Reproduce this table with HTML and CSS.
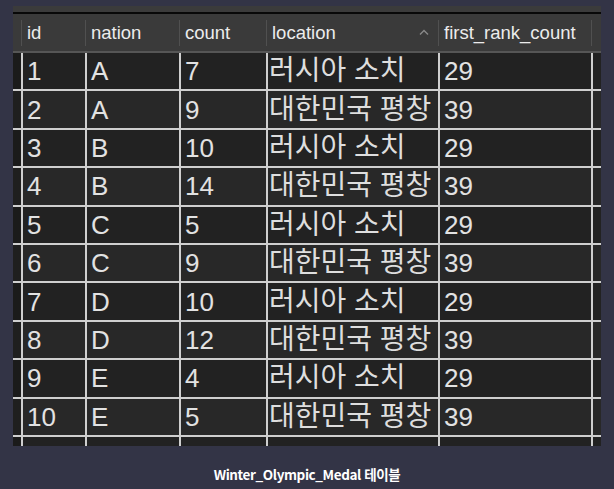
FILE: index.html
```html
<!DOCTYPE html>
<html lang="ko">
<head>
<meta charset="utf-8">
<title>Winter_Olympic_Medal</title>
<link rel="stylesheet" href="styles.css">
</head>
<body>
<main class="page">
  <figure class="shot">
    <div class="topband"></div>
    <table class="grid">
      <colgroup>
        <col class="c-rh"><col class="c-id"><col class="c-nation"><col class="c-count"><col class="c-loc"><col class="c-frc"><col class="c-rest">
      </colgroup>
      <thead>
        <tr>
          <th class="rh"></th>
          <th><div class="hc">id</div></th>
          <th><div class="hc">nation</div></th>
          <th><div class="hc">count</div></th>
          <th><div class="hc hc-sort">location<svg class="caret" width="10" height="6" viewBox="0 0 10 6"><path d="M1 5.5 L5 1.5 L9 5.5" fill="none" stroke="#8a8a8a" stroke-width="1.4"/></svg></div></th>
          <th><div class="hc">first_rank_count</div></th>
          <th><div class="hc hc-end"></div></th>
        </tr>
      </thead>
      <tbody>
        <tr><td class="rh"></td><td>1</td><td>A</td><td>7</td><td class="ko">러시아 소치</td><td>29</td><td class="rest"></td></tr>
        <tr><td class="rh"></td><td>2</td><td>A</td><td>9</td><td class="ko">대한민국 평창</td><td>39</td><td class="rest"></td></tr>
        <tr><td class="rh"></td><td>3</td><td>B</td><td>10</td><td class="ko">러시아 소치</td><td>29</td><td class="rest"></td></tr>
        <tr><td class="rh"></td><td>4</td><td>B</td><td>14</td><td class="ko">대한민국 평창</td><td>39</td><td class="rest"></td></tr>
        <tr><td class="rh"></td><td>5</td><td>C</td><td>5</td><td class="ko">러시아 소치</td><td>29</td><td class="rest"></td></tr>
        <tr><td class="rh"></td><td>6</td><td>C</td><td>9</td><td class="ko">대한민국 평창</td><td>39</td><td class="rest"></td></tr>
        <tr><td class="rh"></td><td>7</td><td>D</td><td>10</td><td class="ko">러시아 소치</td><td>29</td><td class="rest"></td></tr>
        <tr><td class="rh"></td><td>8</td><td>D</td><td>12</td><td class="ko">대한민국 평창</td><td>39</td><td class="rest"></td></tr>
        <tr><td class="rh"></td><td>9</td><td>E</td><td>4</td><td class="ko">러시아 소치</td><td>29</td><td class="rest"></td></tr>
        <tr><td class="rh"></td><td>10</td><td>E</td><td>5</td><td class="ko">대한민국 평창</td><td>39</td><td class="rest"></td></tr>
        <tr class="partial"><td class="rh"></td><td></td><td></td><td></td><td></td><td></td><td class="rest"></td></tr>
      </tbody>
    </table>
  </figure>
  <p class="caption">Winter_Olympic_Medal 테이블</p>
</main>
</body>
</html>
```
FILE: styles.css
```css
html, body {
  margin: 0;
  padding: 0;
  background: #333446;
}

.page {
  width: 614px;
  height: 489px;
  padding-top: 6px;
  box-sizing: border-box;
  display: flex;
  flex-direction: column;
}

.shot {
  margin: 0 0 0 13px;
  width: 588px;
  background: #232323;
}

.topband {
  height: 6px;
  background: #3b3b3b;
  border-bottom: 2px solid #080808;
}

.grid {
  table-layout: fixed;
  border-collapse: separate;
  border-spacing: 0;
  width: 588px;
  font-family: "Liberation Sans", "Noto Sans CJK KR", Arial, sans-serif;
  color: #e2e2e2;
}

.c-rh { width: 8px; }
.c-id { width: 64px; }
.c-nation { width: 94px; }
.c-count { width: 87px; }
.c-loc { width: 172px; }
.c-frc { width: 153px; }
.c-rest { width: 10px; }

thead th {
  background: #3a3a3a;
  height: 37px;
  padding: 0;
  border-bottom: 2px solid #565656;
  font-weight: normal;
  text-align: left;
  font-size: 18.5px;
  vertical-align: middle;
  color: #ececec;
}

.hc {
  height: 26px;
  line-height: 26px;
  border-left: 1.5px solid #505050;
  padding-left: 5px;
  white-space: nowrap;
  overflow: hidden;
  box-sizing: border-box;
}

.hc-sort {
  display: flex;
  align-items: center;
  justify-content: space-between;
  padding-right: 9px;
}

.caret {
  margin-top: -2px;
}

tbody td {
  height: 36.4px;
  padding: 0 0 0 4px;
  border-left: 2px solid #cfcfcf;
  border-bottom: 2px solid #cfcfcf;
  font-size: 26px;
  line-height: 30px;
  white-space: nowrap;
  overflow: hidden;
  background: #222222;
  box-sizing: content-box;
}

tbody td.ko {
  font-size: 28px;
  padding-left: 1px;
  color: #dedede;
}

tbody tr:nth-child(even) td {
  background: #282828;
}

tbody td.rh {
  border-left: none;
  padding: 0;
  background: #1b1b1b;
}

tbody tr:nth-child(even) td.rh {
  background: #1f1f1f;
}

tbody td.rest {
  padding: 0;
}

tbody tr.partial td {
  height: 9px;
  border-bottom: none;
  background: #222222;
}

tbody tr.partial td.rh {
  background: #1b1b1b;
}

.caption {
  margin: 18px 0 0;
  text-align: center;
  font-family: "Noto Sans CJK KR", "Noto Sans", sans-serif;
  font-weight: 700;
  font-size: 13.5px;
  line-height: 20px;
  letter-spacing: -0.4px;
  color: #ffffff;
}
```
